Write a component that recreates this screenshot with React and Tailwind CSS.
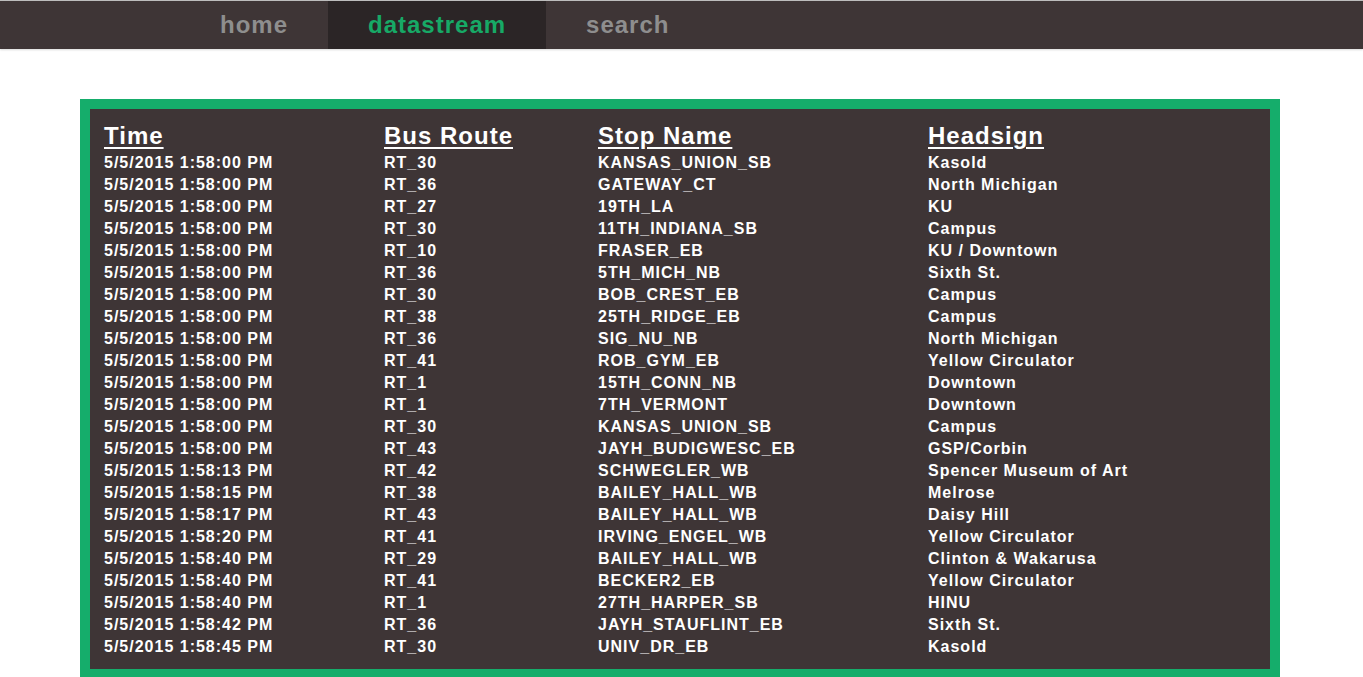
import React from "react";

const rows = [
  ["5/5/2015 1:58:00 PM", "RT_30", "KANSAS_UNION_SB", "Kasold"],
  ["5/5/2015 1:58:00 PM", "RT_36", "GATEWAY_CT", "North Michigan"],
  ["5/5/2015 1:58:00 PM", "RT_27", "19TH_LA", "KU"],
  ["5/5/2015 1:58:00 PM", "RT_30", "11TH_INDIANA_SB", "Campus"],
  ["5/5/2015 1:58:00 PM", "RT_10", "FRASER_EB", "KU / Downtown"],
  ["5/5/2015 1:58:00 PM", "RT_36", "5TH_MICH_NB", "Sixth St."],
  ["5/5/2015 1:58:00 PM", "RT_30", "BOB_CREST_EB", "Campus"],
  ["5/5/2015 1:58:00 PM", "RT_38", "25TH_RIDGE_EB", "Campus"],
  ["5/5/2015 1:58:00 PM", "RT_36", "SIG_NU_NB", "North Michigan"],
  ["5/5/2015 1:58:00 PM", "RT_41", "ROB_GYM_EB", "Yellow Circulator"],
  ["5/5/2015 1:58:00 PM", "RT_1", "15TH_CONN_NB", "Downtown"],
  ["5/5/2015 1:58:00 PM", "RT_1", "7TH_VERMONT", "Downtown"],
  ["5/5/2015 1:58:00 PM", "RT_30", "KANSAS_UNION_SB", "Campus"],
  ["5/5/2015 1:58:00 PM", "RT_43", "JAYH_BUDIGWESC_EB", "GSP/Corbin"],
  ["5/5/2015 1:58:13 PM", "RT_42", "SCHWEGLER_WB", "Spencer Museum of Art"],
  ["5/5/2015 1:58:15 PM", "RT_38", "BAILEY_HALL_WB", "Melrose"],
  ["5/5/2015 1:58:17 PM", "RT_43", "BAILEY_HALL_WB", "Daisy Hill"],
  ["5/5/2015 1:58:20 PM", "RT_41", "IRVING_ENGEL_WB", "Yellow Circulator"],
  ["5/5/2015 1:58:40 PM", "RT_29", "BAILEY_HALL_WB", "Clinton & Wakarusa"],
  ["5/5/2015 1:58:40 PM", "RT_41", "BECKER2_EB", "Yellow Circulator"],
  ["5/5/2015 1:58:40 PM", "RT_1", "27TH_HARPER_SB", "HINU"],
  ["5/5/2015 1:58:42 PM", "RT_36", "JAYH_STAUFLINT_EB", "Sixth St."],
  ["5/5/2015 1:58:45 PM", "RT_30", "UNIV_DR_EB", "Kasold"],
];

const headers = ["Time", "Bus Route", "Stop Name", "Headsign"];

export default function App() {
  return (
    <div
      className="min-h-[677px] bg-white"
      style={{ fontFamily: '"Liberation Sans", Arial, sans-serif' }}
    >
      <div className="border-t border-[#bdbdbd] bg-[#3e3536] h-[49px] shadow-[0_1px_2px_rgba(0,0,0,0.15)]">
        <nav className="flex h-full pl-[180px]">
          <a className="flex items-center px-[40px] text-[24px] font-bold tracking-[1px] text-[#8e8e8e]">
            home
          </a>
          <a className="flex items-center px-[40px] text-[24px] font-bold tracking-[1px] text-[#17a966] bg-[#2b2526]">
            datastream
          </a>
          <a className="flex items-center px-[40px] text-[24px] font-bold tracking-[1px] text-[#8e8e8e]">
            search
          </a>
        </nav>
      </div>

      <div className="ml-[80px] mt-[50px] w-[1200px] border-[10px] border-[#15ad6b] bg-[#3e3536] pl-[14px] pt-[13px] pb-[11px] text-white font-bold tracking-[1px]">
        <div className="grid grid-cols-[280px_214px_330px_1fr]">
          {headers.map((h) => (
            <div key={h} className="text-[24px] leading-[27px] pb-[3px]">
              <span className="underline decoration-2 underline-offset-[3px]">{h}</span>
            </div>
          ))}
          {rows.map((r, i) =>
            r.map((c, j) => (
              <div key={i + "-" + j} className="text-[16px] leading-[22px] whitespace-nowrap">
                {c}
              </div>
            ))
          )}
        </div>
      </div>
    </div>
  );
}
